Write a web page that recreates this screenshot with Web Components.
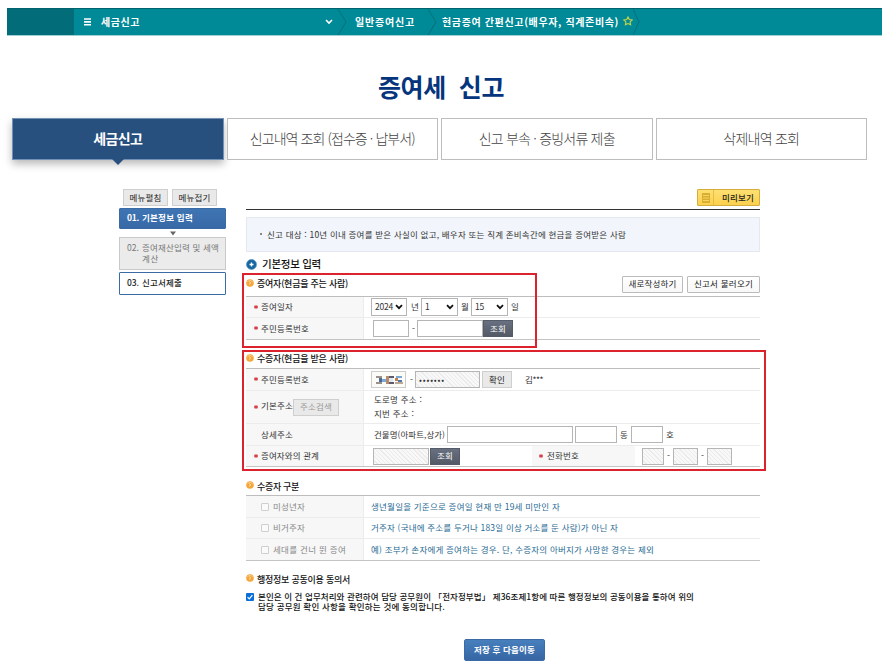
<!DOCTYPE html>
<html lang="ko">
<head>
<meta charset="utf-8">
<title>증여세 신고</title>
<style>
  body { margin: 0; background: #fff; font-family: "Liberation Sans", "Noto Sans CJK KR", sans-serif; }
</style>
</head>
<body>
<gift-tax-page></gift-tax-page>

<script>
const FUENTE = '"Noto Sans CJK KR", sans-serif';

// Texto que ajusta el espaciado entre letras a un ancho dado
class FitText extends HTMLElement {
  constructor() {
    super();
    // sin espacios entre etiquetas: white-space es pre
    this.attachShadow({ mode: 'open' }).innerHTML = '<style>:host { display: inline-block; white-space: pre; flex: none; padding-bottom: 2px; } span { display: inline-block; }</style><span><slot></slot></span>';
  }
  connectedCallback() {
    const w = parseFloat(this.getAttribute('w'));
    if (!w) return;
    const span = this.shadowRoot.querySelector('span');
    const n = this.textContent.length;
    span.style.letterSpacing = '0px';
    span.style.letterSpacing = (w - span.getBoundingClientRect().width) / n + 'px';
    this.style.width = w + 'px';
  }
}

// Barra superior con la ruta
class TopBar extends HTMLElement {
  constructor() {
    super();
    this.attachShadow({ mode: 'open' }).innerHTML = `
      <style>
        :host { display: flex; align-items: center; height: 26px; margin: 8px 11px 0 7px; background: #008996;
          border-top: 1px solid #00626c; box-shadow: 0 1px 0 #9ed0d4; color: #fff; font-size: 10px; font-weight: 700; }
        .dark { width: 67px; height: 100%; background: #026d78; }
        .menu { margin: 0 10px; }
        .chev { margin-left: auto; }
        .first { display: flex; align-items: center; width: 259px; }
        svg { display: block; flex: none; }
      </style>
      <div class="dark"></div>
      <div class="first">
        <svg class="menu" width="7" height="8" viewBox="0 0 7 8"><path d="M0 1h7M0 3.9h7M0 6.8h7" stroke="#fff" stroke-width="1.6"/></svg>
        <fit-text w="39">세금신고</fit-text>
        <svg class="chev" width="8" height="6" viewBox="0 0 8 6"><path d="M1 1l3 3 3-3" fill="none" stroke="#fff" stroke-width="1.6"/></svg>
      </div>
      <svg width="10" height="26" viewBox="0 0 10 26" style="margin-left:4px"><path d="M1 0l8 13-8 13" fill="none" stroke="#03717c"/></svg>
      <fit-text w="60" style="margin-left:8px">일반증여신고</fit-text>
      <svg width="10" height="26" viewBox="0 0 10 26" style="margin-left:12px"><path d="M1 0l8 13-8 13" fill="none" stroke="#03717c"/></svg>
      <fit-text w="177" style="margin-left:5px">현금증여 간편신고(배우자, 직계존비속)</fit-text>
      <svg width="10" height="10" viewBox="0 0 10 10" style="margin:-2px 0 0 4px"><path d="M5 .9l1.3 2.6 2.9.4-2.1 2 .5 2.9L5 7.5 2.4 8.8l.5-2.9-2.1-2 2.9-.4z" fill="none" stroke="#c6d545" stroke-width="1.1"/></svg>
      <svg width="7" height="26" viewBox="0 0 7 26"><path d="M0 0l6 13-6 13" fill="none" stroke="#03717c"/></svg>`;
  }
}

// Pestaña principal
class MainTab extends HTMLElement {
  constructor() {
    super();
    this.attachShadow({ mode: 'open' }).innerHTML = `
      <style>
        :host { display: flex; align-items: center; justify-content: center; position: relative; box-sizing: border-box;
          height: 42px; border: 1px solid #bdbdbd; background: #fff; color: #444; font-size: 14px; font-weight: 300; }
        :host([active]) { background: #27507f; border-color: #7391b5; color: #fff; font-weight: 700; box-shadow: 0 4px 8px rgba(0,0,0,.28); }
        i { display: none; position: absolute; left: 50%; top: 40px; margin-left: -6px;
          border: 6px solid transparent; border-top-color: #27507f; border-bottom: 0; }
        :host([active]) i { display: block; }
      </style>
      <slot></slot><i></i>`;
  }
}

// Botones pequeños: gris, blanco, oscuro, azul
class UiButton extends HTMLElement {
  constructor() {
    super();
    this.attachShadow({ mode: 'open' }).innerHTML = `
      <style>
        :host { display: inline-flex; align-items: center; justify-content: center; box-sizing: border-box; flex: none;
          height: 17px; border: 1px solid #cfcfcf; background: #e9e9e9; color: #222; font-size: 8.5px; line-height: 12px; }
        :host([kind="white"]) { background: linear-gradient(#fff, #f8f8f8); border-color: #bbb; border-radius: 1px; }
        :host([kind="dark"]) { background: linear-gradient(#697080, #535965); border-color: #555c69; color: #fff; }
        :host([kind="off"]) { color: #999; }
        :host([kind="blue"]) { background: linear-gradient(#477fbd, #3766a4); border-color: #3b6ba6; border-radius: 2px; color: #fff; font-weight: 700; }
      </style>
      <slot></slot>`;
  }
}

// Campo de texto
class UiField extends HTMLElement {
  constructor() {
    super();
    this.attachShadow({ mode: 'open' }).innerHTML = `
      <style>
        :host { display: inline-flex; align-items: center; box-sizing: border-box; height: 17px; border: 1px solid #b5b5b5;
          background: #fff; font-size: 8.5px; flex: none; overflow: hidden; }
        :host([off]) { background: repeating-linear-gradient(45deg, #f8f8f8 0 2px, #ebebeb 2px 3px); }
      </style>
      <slot></slot>`;
  }
}

// Lista desplegable
class UiSelect extends HTMLElement {
  constructor() {
    super();
    this.attachShadow({ mode: 'open' }).innerHTML = `
      <style>
        :host { display: inline-flex; align-items: center; justify-content: space-between; box-sizing: border-box; height: 18px;
          padding: 0 3px; border: 1px solid #b5b5b5; background: #fff; flex: none; font-size: 8.5px; }
      </style>
      <slot></slot>
      <svg width="8" height="6" viewBox="0 0 8 6"><path d="M1 1.2l3 3 3-3" fill="none" stroke="#111" stroke-width="1.8"/></svg>`;
  }
}

// Título de sección con viñeta naranja
class SectionTitle extends HTMLElement {
  constructor() {
    super();
    this.attachShadow({ mode: 'open' }).innerHTML = `
      <style>
        :host { display: flex; align-items: center; height: 14px; font-size: 9px; font-weight: 500; color: #111; }
        svg { margin: -4px 3px 0 0; flex: none; }
      </style>
      <svg width="8" height="8" viewBox="0 0 8 8"><circle cx="4" cy="4" r="3.8" fill="#f4a63b"/><path d="M1.3 3A3 3 0 0 1 6.7 3" fill="none" stroke="#f9cf8e" stroke-width=".8"/><path d="M3.2 2.6L4.7 4 3.2 5.4" fill="none" stroke="#fde8c4" stroke-width="1"/></svg>
      <slot></slot>`;
  }
}

// Fila de formulario: etiqueta y contenido
class FormRow extends HTMLElement {
  constructor() {
    super();
    this.attachShadow({ mode: 'open' }).innerHTML = `
      <style>
        :host { display: flex; box-sizing: border-box; border-bottom: 1px solid #ececec; font-size: 8.5px; color: #333; }
        :host([last]) { border-bottom-color: #c4c4c4; }
        .label { display: flex; align-items: center; box-sizing: border-box; width: 118px; padding-left: 8px;
          background: #f7f7f7; border-right: 1px solid #ececec; flex: none; }
        .req { width: 7px; flex: none; margin-bottom: 1px; }
        .req svg { display: block; visibility: hidden; }
        :host([req]) .req svg { visibility: visible; }
        .body { display: flex; align-items: center; flex: 1; min-width: 0; }
      </style>
      <div class="label"><span class="req"><svg width="4" height="4" viewBox="0 0 4 4"><path d="M2 0v4M0 1l4 2M0 3l4-2" stroke="#d3232d" stroke-width=".9"/></svg></span><slot name="label"></slot></div>
      <div class="body"><slot></slot></div>`;
  }
}

// Menú lateral de pasos
class StepMenu extends HTMLElement {
  constructor() {
    super();
    this.attachShadow({ mode: 'open' }).innerHTML = `
      <style>
        :host { display: block; width: 107px; font-size: 8.5px; color: #222; }
        .btns { display: flex; gap: 4px; margin: 0 0 2px 4px; }
        .step { display: flex; align-items: center; box-sizing: border-box; padding-left: 7px; border: 1px solid #3b6ba5; line-height: 11px; font-weight: 500; }
        .on { height: 21px; background: linear-gradient(#3f75b4, #3869a6); color: #fff; font-weight: 700; border-radius: 1px; }
        .two { height: 33px; background: #ebebeb; border-color: #c9c9c9; color: #777; font-weight: 400; align-items: flex-start; padding-top: 4px; }
        .two fit-text { display: block; padding-bottom: 0; }
        .three { height: 23px; margin-top: 2px; border-radius: 1px; }
        .num { width: 15px; }
        .arrow { display: block; margin: 2px auto 1px; }
      </style>
      <div class="btns">
        <ui-button style="width:45px"><fit-text w="32">메뉴펼침</fit-text></ui-button>
        <ui-button style="width:45px"><fit-text w="32">메뉴접기</fit-text></ui-button>
      </div>
      <div class="step on"><span class="num"><fit-text w="12">01.</fit-text></span><fit-text w="51">기본정보 입력</fit-text></div>
      <svg class="arrow" width="6" height="5" viewBox="0 0 6 5"><path d="M0 .5h6L3 4.5z" fill="#666"/></svg>
      <div class="step two"><span class="num"><fit-text w="12">02.</fit-text></span><div><fit-text w="77">증여재산입력 및 세액</fit-text><fit-text w="17">계산</fit-text></div></div>
      <div class="step three"><span class="num"><fit-text w="12">03.</fit-text></span><fit-text w="40">신고서제출</fit-text></div>`;
  }
}

// Formulario principal
class GiftForm extends HTMLElement {
  constructor() {
    super();
    this.attachShadow({ mode: 'open' }).innerHTML = `
      <style>
        :host { display: block; width: 514px; font-size: 8.5px; color: #333; }
        .top { display: flex; justify-content: flex-end; height: 20px; border-bottom: 1px solid #333; }
        .preview { display: flex; align-items: center; box-sizing: border-box; width: 63px; height: 17px; border: 1px solid #d4ad3c;
          background: linear-gradient(#fee071, #fbd04e); border-radius: 1px; color: #222; font-weight: 500; }
        .preview .ic { display: flex; align-items: center; justify-content: center; width: 15px; height: 15px; border-right: 1px solid #e6bd48; margin-right: 8px; }
        .info { display: flex; align-items: center; box-sizing: border-box; height: 35px; margin-top: 7px; padding-left: 13px;
          background: #f2f6fc; border: 1px solid #e4e9f0; }
        .info svg { margin-right: 5px; }
        h2 { display: flex; align-items: center; height: 14px; margin: 5px 0 0; font-size: 10.5px; font-weight: 500; color: #111; }
        h2 svg { margin-right: 5px; }
        .group { position: relative; }
        .frame { position: absolute; box-sizing: border-box; border: 2px solid #dc222d; pointer-events: none; }
        .head { display: flex; justify-content: space-between; align-items: center; }
        .rows { border-top: 1px solid #bdbdbd; }
        .hint { color: #1f6a93; margin-left: 7px; }
        .cb { box-sizing: border-box; width: 8px; height: 8px; border: 1px solid #cfcfcf; border-radius: 1px; background: #fafafa; margin-right: 4px; }
        .off-label { display: flex; align-items: center; color: #888; }
        .lab2 { display: flex; align-items: center; box-sizing: border-box; align-self: stretch; width: 103px; margin-left: auto; padding-left: 7px; background: #f7f7f7; }
        .agree { display: flex; margin-top: 4px; color: #111; font-weight: 500; line-height: 10px; }
        .agree svg { margin: 2px 4px 0 0; flex: none; }
        .agree fit-text { display: block; padding-bottom: 0; }
        .addr { line-height: 14px; margin: 0 0 2px 10px; }
        .addr fit-text { display: block; padding-bottom: 0; }
      </style>
      <div class="top">
        <div class="preview"><span class="ic"><svg width="8" height="10" viewBox="0 0 8 10"><path d="M0 0h8v10H0z" fill="#d9ae33"/><path d="M1 2.5h6M1 5h6M1 7.5h6" stroke="#f7d35f"/></svg></span><fit-text w="32">미리보기</fit-text></div>
      </div>
      <div class="info">
        <svg width="2" height="3" viewBox="0 0 2 3"><path d="M0 0h2v2H0z" fill="#888"/></svg>
        <fit-text w="359">신고 대상 : 10년 이내 증여를 받은 사실이 없고, 배우자 또는 직계 존비속간에 현금을 증여받은 사람</fit-text>
      </div>
      <h2><svg width="11" height="11" viewBox="0 0 11 11"><circle cx="5.5" cy="5.5" r="5" fill="#17669f" stroke="#5c9dc7" stroke-width=".8"/><path d="M5.5 3.5v4M3.5 5.5h4" stroke="#fff" stroke-width="1.4"/></svg><fit-text w="59">기본정보 입력</fit-text></h2>

      <div class="group">
        <div class="frame" style="left:-4px;top:2px;width:295px;height:75px"></div>
        <div class="head" style="height:25px">
          <section-title style="margin-top:2px"><fit-text w="91">증여자(현금을 주는 사람)</fit-text></section-title>
          <div style="display:flex;gap:4px;margin-top:1px">
            <ui-button kind="white" style="width:61px"><fit-text w="48">새로작성하기</fit-text></ui-button>
            <ui-button kind="white" style="width:73px"><fit-text w="59">신고서 불러오기</fit-text></ui-button>
          </div>
        </div>
        <div class="rows">
          <form-row req style="height:21px">
            <fit-text slot="label" w="32">증여일자</fit-text>
            <ui-select style="width:36px;margin-left:7px"><fit-text w="18">2024</fit-text></ui-select>
            <fit-text w="8" style="margin:0 2px 0 4px">년</fit-text>
            <ui-select style="width:37px"><fit-text w="4">1</fit-text></ui-select>
            <fit-text w="8" style="margin:0 2px 0 3px">월</fit-text>
            <ui-select style="width:37px"><fit-text w="9">15</fit-text></ui-select>
            <fit-text w="8" style="margin-left:3px">일</fit-text>
          </form-row>
          <form-row req last style="height:22px">
            <fit-text slot="label" w="48">주민등록번호</fit-text>
            <ui-field style="width:36px;margin-left:9px"></ui-field>
            <fit-text w="3" style="margin:0 2px 0 3px">-</fit-text>
            <ui-field style="width:66px"></ui-field>
            <ui-button kind="dark" style="width:30px"><fit-text w="16">조회</fit-text></ui-button>
          </form-row>
        </div>
      </div>

      <div class="group" style="margin-top:11px">
        <div class="frame" style="left:-4px;top:-1px;width:524px;height:121px"></div>
        <div class="head" style="height:17px"><section-title><fit-text w="91">수증자(현금을 받은 사람)</fit-text></section-title></div>
        <div class="rows">
          <form-row req style="height:22px">
            <fit-text slot="label" w="48">주민등록번호</fit-text>
            <ui-field style="width:35px;margin-left:7px;border-color:#ccc">
              <svg width="33" height="15" viewBox="0 0 33 15" shape-rendering="crispEdges">
                <path d="M0 0h33v15H0z" fill="#fbfbf8"/>
                <path d="M4 4h6v2H4zM4 10h6v2H4z" fill="#9a938c"/><path d="M7 6h3v4H7z" fill="#4b6a94"/><path d="M10 7h4v3h-4z" fill="#7fa9d8"/>
                <path d="M14 4h3v8h-3z" fill="#b88b66"/><path d="M17 4h5v2h-5zM17 10h5v2h-5z" fill="#5e5a6d"/><path d="M17 6h4v4h-4z" fill="#dce9f5"/>
                <path d="M24 4h6v2h-6z" fill="#7ba6d0"/><path d="M23 6h3v3h-3z" fill="#bd8254"/><path d="M26 8h4v2h-4z" fill="#5377a7"/><path d="M23 10h8v2h-8z" fill="#bca897"/>
              </svg>
            </ui-field>
            <fit-text w="3" style="margin:0 2px 0 4px">-</fit-text>
            <ui-field off style="width:65px;padding-left:3px"><fit-text w="26">•••••••</fit-text></ui-field>
            <ui-button style="width:30px;margin-left:2px"><fit-text w="16">확인</fit-text></ui-button>
            <fit-text w="18" style="margin-left:13px">김***</fit-text>
          </form-row>
          <form-row req style="height:33px">
            <fit-text slot="label" w="32" style="padding-bottom:4px">기본주소</fit-text>
            <ui-button slot="label" kind="off" style="width:46px"><fit-text w="32">주소검색</fit-text></ui-button>
            <div class="addr"><fit-text w="48">도로명 주소 :</fit-text><fit-text w="40">지번 주소 :</fit-text></div>
          </form-row>
          <form-row style="height:22px">
            <fit-text slot="label" w="32">상세주소</fit-text>
            <fit-text w="71" style="margin:0 2px 0 10px">건물명(아파트,상가)</fit-text>
            <ui-field style="width:126px"></ui-field>
            <ui-field style="width:42px;margin-left:2px"></ui-field>
            <fit-text w="8" style="margin:0 3px">동</fit-text>
            <ui-field style="width:32px"></ui-field>
            <fit-text w="8" style="margin-left:3px">호</fit-text>
          </form-row>
          <form-row req last style="height:21px">
            <fit-text slot="label" w="58">증여자와의 관계</fit-text>
            <ui-field off style="width:56px;margin-left:9px"></ui-field>
            <ui-button kind="dark" style="width:30px;margin-left:1px"><fit-text w="16">조회</fit-text></ui-button>
            <div class="lab2"><svg width="4" height="4" viewBox="0 0 4 4" style="margin:0 4px 1px 0"><path d="M2 0v4M0 1l4 2M0 3l4-2" stroke="#d3232d" stroke-width=".9"/></svg><fit-text w="32">전화번호</fit-text></div>
            <ui-field off style="width:22px;margin-left:7px"></ui-field>
            <fit-text w="3" style="margin:0 3px 0 3px">-</fit-text>
            <ui-field off style="width:25px"></ui-field>
            <fit-text w="3" style="margin:0 3px 0 3px">-</fit-text>
            <ui-field off style="width:25px;margin-right:28px"></ui-field>
          </form-row>
        </div>
      </div>

      <section-title style="margin-top:12px;height:16px"><fit-text w="42">수증자 구분</fit-text></section-title>
      <div class="rows">
        <form-row style="height:22px">
          <span slot="label" class="off-label"><i class="cb"></i><fit-text w="32">미성년자</fit-text></span>
          <fit-text class="hint" w="189">생년월일을 기준으로 증여일 현재 만 19세 미만인 자</fit-text>
        </form-row>
        <form-row style="height:21px">
          <span slot="label" class="off-label"><i class="cb"></i><fit-text w="32">비거주자</fit-text></span>
          <fit-text class="hint" w="247">거주자 (국내에 주소를 두거나 183일 이상 거소를 둔 사람)가 아닌 자</fit-text>
        </form-row>
        <form-row last style="height:22px">
          <span slot="label" class="off-label"><i class="cb"></i><fit-text w="73">세대를 건너 뛴 증여</fit-text></span>
          <fit-text class="hint" w="283">예) 조부가 손자에게 증여하는 경우. 단, 수증자의 아버지가 사망한 경우는 제외</fit-text>
        </form-row>
      </div>

      <section-title style="margin-top:12px"><fit-text w="93">행정정보 공동이용 동의서</fit-text></section-title>
      <div class="agree">
        <svg width="8" height="8" viewBox="0 0 8 8"><rect width="8" height="8" rx="1" fill="#0b6fd9"/><path d="M1.6 4.1l1.7 1.7 3.1-3.6" fill="none" stroke="#fff" stroke-width="1.2"/></svg>
        <div><fit-text w="436">본인은 이 건 업무처리와 관련하여 담당 공무원이 「전자정부법」 제36조제1항에 따른 행정정보의 공동이용을 통하여 위의</fit-text><fit-text w="187">담당 공무원 확인 사항을 확인하는 것에 동의합니다.</fit-text></div>
      </div>`;
  }
}

class GiftTaxPage extends HTMLElement {
  constructor() {
    super();
    this.attachShadow({ mode: 'open' }).innerHTML = `
      <style>
        :host { display: block; width: 893px; height: 669px; overflow: hidden; font-family: ${FUENTE}; }
        h1 { display: flex; justify-content: center; align-items: center; height: 38px; margin: 33px 11px 0 0; color: #05357c; font-size: 25px; line-height: 38px; font-weight: 700; }
        nav { display: grid; grid-template-columns: repeat(4, 1fr); gap: 3px; margin: 12px 26px 0 12px; }
        .cols { display: flex; align-items: flex-start; gap: 20px; margin: 29px 0 0 119px; }
        .save { display: flex; margin: 28px 0 0 464px; }
      </style>
      <top-bar></top-bar>
      <h1><fit-text w="126">증여세  신고</fit-text></h1>
      <nav>
        <main-tab active><fit-text w="49">세금신고</fit-text></main-tab>
        <main-tab><fit-text w="165">신고내역 조회 (접수증 · 납부서)</fit-text></main-tab>
        <main-tab><fit-text w="136">신고 부속 · 증빙서류 제출</fit-text></main-tab>
        <main-tab><fit-text w="76">삭제내역 조회</fit-text></main-tab>
      </nav>
      <div class="cols">
        <step-menu></step-menu>
        <gift-form></gift-form>
      </div>
      <div class="save"><ui-button kind="blue" style="width:81px;height:22px"><fit-text w="61">저장 후 다음이동</fit-text></ui-button></div>`;
  }
}

customElements.define('top-bar', TopBar);
customElements.define('main-tab', MainTab);
customElements.define('ui-button', UiButton);
customElements.define('ui-field', UiField);
customElements.define('ui-select', UiSelect);
customElements.define('section-title', SectionTitle);
customElements.define('form-row', FormRow);
customElements.define('step-menu', StepMenu);
customElements.define('gift-form', GiftForm);
customElements.define('gift-tax-page', GiftTaxPage);
// Al final, cuando el resto ya está en la página y se puede medir
customElements.define('fit-text', FitText);
</script>
</body>
</html>
